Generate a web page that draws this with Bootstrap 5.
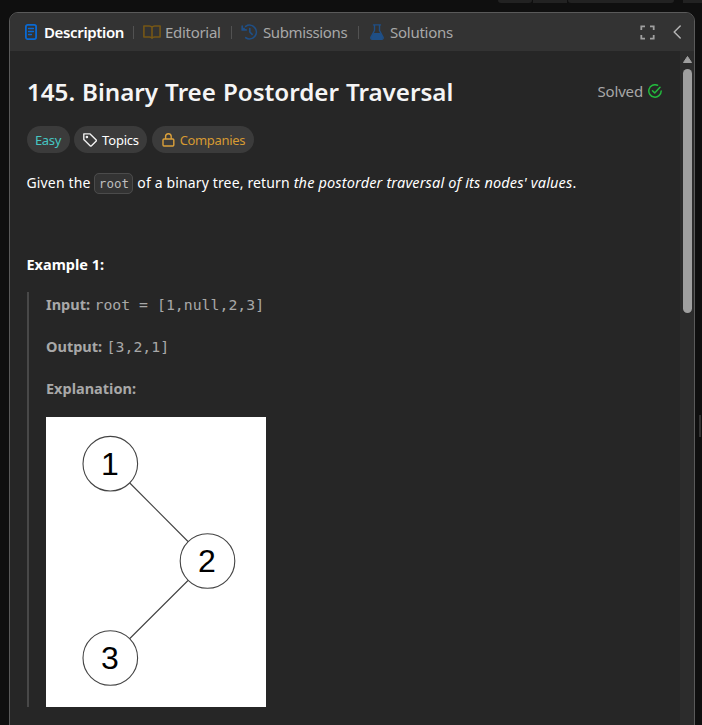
<!DOCTYPE html>
<html lang="en" data-bs-theme="dark">
<head>
<meta charset="utf-8">
<title>145. Binary Tree Postorder Traversal</title>
<meta name="viewport" content="width=device-width, initial-scale=1">
<link href="https://cdn.jsdelivr.net/npm/bootstrap@5.3.0/dist/css/bootstrap.min.css" rel="stylesheet">
<style>
body{background:#0f0f0f;font-family:"Noto Sans","Open Sans",sans-serif;font-size:14px;line-height:20px;color:#fff;height:725px;overflow:hidden}
svg{display:block;flex:none}
.toolstrip{height:12px;padding-left:498px;gap:1px}
.toolstrip span{height:3px;background:#222}
.strip-sm{width:34px}
.strip-lg{width:106px}
.panel{width:686px;height:740px;margin-left:9px;border:1px solid #5a5a5a;border-radius:9px 9px 0 0;background:#262626;overflow:hidden}
.tabs{height:38px;background:#333;color:#a8a8a8;font-size:15px}
.tab-item{gap:4px;white-space:nowrap;color:#a8a8a8;letter-spacing:-.3px}
.sep{width:1px;height:13px;background:#525252;flex:none}
.t1{width:123px;padding-left:15px;gap:7px;color:#fff;font-weight:600;letter-spacing:-.36px}
.t2{width:97px;padding-left:9px}
.t3{width:126px;padding-left:9px;gap:5px;letter-spacing:-.38px}
.t4{padding-left:11px;gap:6px;letter-spacing:-.25px}
.chev{margin:0 12px 0 18px}
.content{width:670px;height:690px;padding:25px 18px 0 17px}
h1{font-size:24.200px;line-height:32px;font-weight:600;color:#f5f5f5;margin:0;white-space:nowrap;letter-spacing:-.03px;word-spacing:.8px}
.solved{font-size:15px;color:#a8a8a8;gap:5px;letter-spacing:-.15px;padding-bottom:2px}
.tag{height:27px;border-radius:14px;background:#3b3b3b;font-size:13px;white-space:nowrap}
.easy{width:43px;color:#46c6c2;letter-spacing:-.3px}
.topics{width:73px;padding-left:9px;gap:5px;letter-spacing:-.2px}
.companies{width:102px;padding-left:10px;gap:5px;color:#d69a32;letter-spacing:-.35px}
.tags{gap:4.6px;margin:18px 0 0 -.5px}
.statement{margin:19px 0 0 -.5px;height:20px;white-space:nowrap;line-height:20px;letter-spacing:.15px}
.statement code{font:12.5px/18px "DejaVu Sans Mono",monospace;letter-spacing:0;color:#bdbdbd;background:#333;border:1px solid #4b4b4b;border-radius:5px;padding:2px 3.5px}
.statement em{font-size:14.5px;letter-spacing:.15px}
.example{margin:62px 0 0 -.5px;font-weight:700;font-size:14.5px;line-height:20px}
.quote{margin-top:18px;border-left:2px solid #484848;padding-left:17px;height:415px;color:#a8a8a8}
.quote p{margin:0;height:42px;line-height:24px;white-space:nowrap}
.quote p.exp{height:41px}
.quote b{font-size:14.5px}
.quote .mono{font-family:"DejaVu Sans Mono",monospace;font-size:14.8px;margin-left:.8px;letter-spacing:.02px}
.track{width:14px;background:#2c2c2c}
.track svg{margin:4px 0 5px 3px}
.thumb{width:9px;height:244px;border-radius:5px;background:#a0a0a0;margin-left:3px}
.grip{position:absolute;left:699px;top:415px;width:2px;height:22px;background:#333}
</style>
</head>
<body>
<div class="toolstrip d-flex"><span class="strip-sm rounded-bottom"></span><span class="strip-sm"></span><span class="strip-lg rounded-bottom"></span><span class="ms-2 flex-fill"></span></div>
<main class="panel">
<nav class="tabs d-flex align-items-center">
<div class="tab-item t1 d-flex align-items-center"><svg width="12" height="16" viewBox="0 0 12 16" fill="none" stroke="#0a69d2" stroke-width="1.8"><rect x=".9" y=".9" width="10.2" height="14.2" rx="1.8"/><path stroke-width="1.3" stroke-linecap="round" d="M3.500 4.500h5M3.500 7.500h5M3.500 10.500h3"/></svg><span>Description</span></div><i class="sep"></i>
<div class="tab-item t2 d-flex align-items-center"><svg width="18" height="14" viewBox="0 0 18 14" fill="none" stroke="#765716" stroke-width="1.6" stroke-linejoin="round"><path d="M9 2.200C8.200 1.200 7.400 1 6.200 1H.9v11h5.600c1.200 0 2 .4 2.500 1.200.5-.8 1.300-1.200 2.500-1.200h5.600V1h-5.300C10.600 1 9.800 1.200 9 2.200zV13"/></svg><span>Editorial</span></div><i class="sep"></i>
<div class="tab-item t3 d-flex align-items-center"><svg width="17" height="16" viewBox="0 0 17 16" fill="none" stroke="#1f4f86" stroke-width="1.7" stroke-linecap="round" stroke-linejoin="round"><path d="M1.200 2v3.900h3.900M1.500 5.600l1.600-1.200M4.700 2.400A6.800 6.800 0 1 1 4.800 13.700M8.800 4.500V8l2.300 2.300"/></svg><span>Submissions</span></div><i class="sep"></i>
<div class="tab-item t4 d-flex align-items-center"><svg width="14" height="16" viewBox="0 0 14 16"><path fill="none" stroke="#1f4f86" stroke-width="1.400" stroke-linejoin="round" stroke-linecap="round" d="M3.500.9h7M4.500 1v5.500L1 13c-.5 1.300.1 2.200 1.300 2.200h9.400c1.200 0 1.800-.9 1.300-2.200L9.500 6.500V1"/><path fill="#1f4f86" d="M3.500 9h7l2.500 4-.8 2H1.800L1 13.500z"/></svg><span>Solutions</span></div>
<svg class="ms-auto" width="15" height="15" viewBox="0 0 15 15" fill="none" stroke="#a0a0a0" stroke-width="1.800"><path d="M1.300 5V1.300H5M10 1.300h3.700V5M13.700 10v3.700H10M5 13.700H1.300V10"/></svg>
<svg class="chev" width="9" height="14" viewBox="0 0 9 14" fill="none" stroke="#b3b3b3" stroke-width="1.500" stroke-linecap="round" stroke-linejoin="round"><path d="M7.200 1 1.200 7l6 6"/></svg>
</nav>
<div class="d-flex">
<section class="content">
<div class="d-flex justify-content-between align-items-center"><h1>145. Binary Tree Postorder Traversal</h1>
<div class="solved d-flex align-items-center"><span>Solved</span><svg width="14" height="14" viewBox="0 0 14 14" fill="none" stroke="#23b83d" stroke-width="1.500" stroke-linecap="round" stroke-linejoin="round"><path d="M9.600 1.300A6.200 6.200 0 1 0 13.200 7M4.500 6.700l2.200 2.200L12 3.300"/></svg></div></div>
<div class="tags d-flex">
<span class="tag easy d-flex align-items-center justify-content-center">Easy</span>
<span class="tag topics d-flex align-items-center"><svg width="14" height="14" viewBox="0 0 14 14" fill="none" stroke="#eee" stroke-width="1.400" stroke-linejoin="round"><path d="M.8.9h6.300L13 6.800c.5.500.5.900 0 1.400l-4.500 4.500c-.5.500-.9.500-1.400 0L.8 6.500z"/><circle cx="3.900" cy="4" r=".6" fill="#eee"/></svg><span>Topics</span></span>
<span class="tag companies d-flex align-items-center"><svg width="13" height="14" viewBox="0 0 13 14" fill="none" stroke="#dca13b" stroke-width="1.400"><rect x="1" y="6" width="10.800" height="7" rx="1"/><path d="M3.600 6V3.500a2.800 2.800 0 0 1 5.600 0V6"/></svg><span>Companies</span></span>
</div>
<p class="statement">Given the <code>root</code> of a binary tree, return <em>the postorder traversal of its nodes' values</em>.</p>
<p class="example">Example 1:</p>
<div class="quote"><p><b>Input:</b> <span class="mono">root = [1,null,2,3]</span></p><p><b>Output:</b> <span class="mono">[3,2,1]</span></p><p class="exp"><b>Explanation:</b></p>
<svg width="220" height="290" viewBox="0 0 220 290"><path fill="#fff" d="M0 0h220v290H0z"/><g fill="none" stroke="#444" stroke-width="1.100"><circle cx="64.300" cy="46.700" r="27.300"/><circle cx="161.500" cy="144" r="27.300"/><circle cx="64.300" cy="241" r="27.300"/><path d="M83.800 66 142 124.500M142 163.500l-58.200 58"/></g><g fill="#000" font-family="Liberation Sans, sans-serif" font-size="32" text-anchor="middle"><text x="64" y="58">1</text><text x="161" y="155">2</text><text x="64" y="252">3</text></g></svg></div>
</section>
<div class="track"><svg width="10" height="9" viewBox="0 0 10 9"><path fill="#a0a0a0" d="M4.500 1.500 8.500 7.500h-8z" stroke="#a0a0a0" stroke-linejoin="round"/></svg><div class="thumb"></div></div>
</div>
</main>
<div class="grip"></div>
<script src="https://cdn.jsdelivr.net/npm/bootstrap@5.3.0/dist/js/bootstrap.bundle.min.js"></script>
</body>
</html>
